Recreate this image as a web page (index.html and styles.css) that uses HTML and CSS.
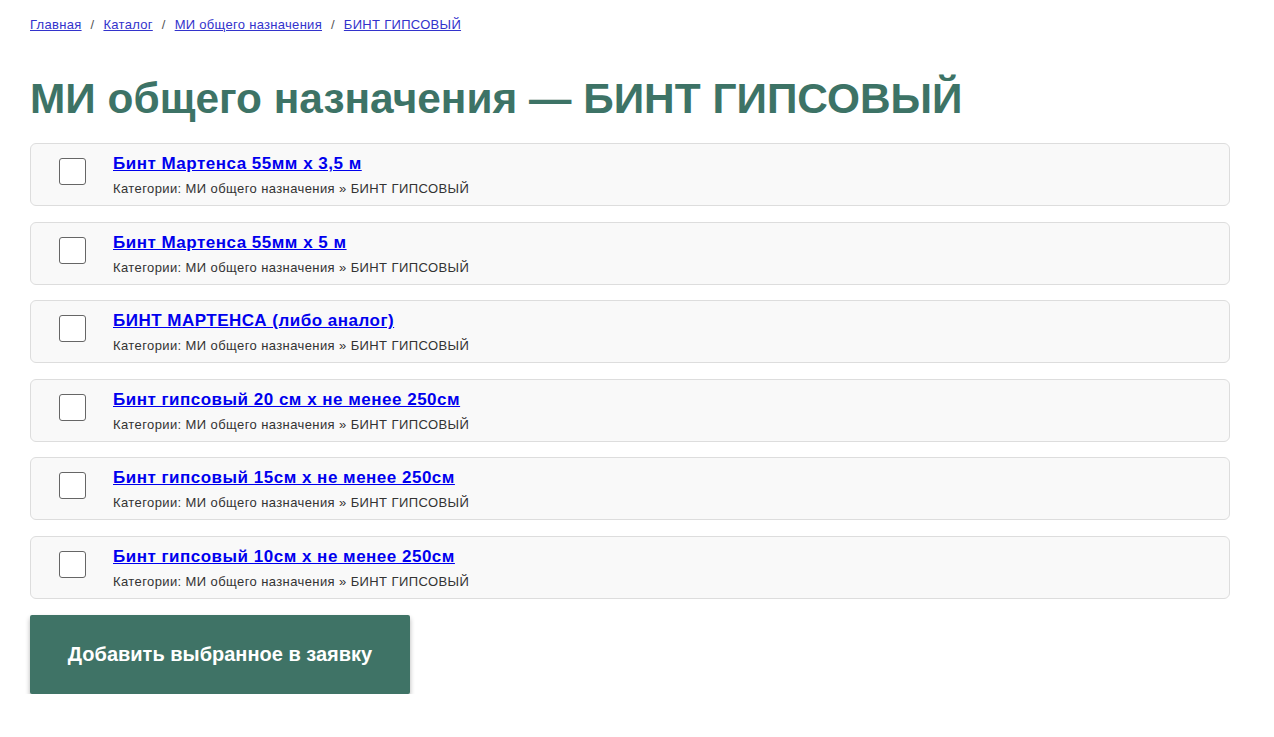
FILE: index.html
```html
<!DOCTYPE html>
<html lang="ru">
<head>
<meta charset="utf-8">
<title>МИ общего назначения — БИНТ ГИПСОВЫЙ</title>
<link rel="stylesheet" href="styles.css">
</head>
<body>
<div class="page">
  <nav class="crumbs">
    <a href="#">Главная</a><span class="sep">/</span>
    <a href="#">Каталог</a><span class="sep">/</span>
    <a href="#">МИ общего назначения</a><span class="sep">/</span>
    <a href="#">БИНТ ГИПСОВЫЙ</a>
  </nav>
  <h1 class="title">МИ общего назначения — БИНТ ГИПСОВЫЙ</h1>
  <form class="list">
    <label class="item">
      <span class="box"><input type="checkbox"></span>
      <span class="info">
        <a class="name" href="#">Бинт Мартенса 55мм х 3,5 м</a>
        <span class="cats">Категории: МИ общего назначения » БИНТ ГИПСОВЫЙ</span>
      </span>
    </label>
    <label class="item">
      <span class="box"><input type="checkbox"></span>
      <span class="info">
        <a class="name" href="#">Бинт Мартенса 55мм х 5 м</a>
        <span class="cats">Категории: МИ общего назначения » БИНТ ГИПСОВЫЙ</span>
      </span>
    </label>
    <label class="item">
      <span class="box"><input type="checkbox"></span>
      <span class="info">
        <a class="name" href="#">БИНТ МАРТЕНСА (либо аналог)</a>
        <span class="cats">Категории: МИ общего назначения » БИНТ ГИПСОВЫЙ</span>
      </span>
    </label>
    <label class="item">
      <span class="box"><input type="checkbox"></span>
      <span class="info">
        <a class="name" href="#">Бинт гипсовый 20 см х не менее 250см</a>
        <span class="cats">Категории: МИ общего назначения » БИНТ ГИПСОВЫЙ</span>
      </span>
    </label>
    <label class="item">
      <span class="box"><input type="checkbox"></span>
      <span class="info">
        <a class="name" href="#">Бинт гипсовый 15см х не менее 250см</a>
        <span class="cats">Категории: МИ общего назначения » БИНТ ГИПСОВЫЙ</span>
      </span>
    </label>
    <label class="item">
      <span class="box"><input type="checkbox"></span>
      <span class="info">
        <a class="name" href="#">Бинт гипсовый 10см х не менее 250см</a>
        <span class="cats">Категории: МИ общего назначения » БИНТ ГИПСОВЫЙ</span>
      </span>
    </label>
    <button type="button" class="submit">Добавить выбранное в заявку</button>
  </form>
</div>
</body>
</html>
```

FILE: styles.css
```css
html, body {
  margin: 0;
  padding: 0;
  background: #ffffff;
}
body {
  font-family: "Liberation Sans", Arial, sans-serif;
  color: #333;
}
.page {
  width: 1200px;
  padding: 15px 0 0 30px;
}
.crumbs {
  font-size: 13px;
  line-height: 20px;
  letter-spacing: 0.3px;
  color: #555;
}
.crumbs a {
  color: #3333cc;
  text-decoration: underline;
}
.crumbs .sep {
  margin: 0 5px 0 9px;
}
.title {
  margin: 38px 0 18px;
  font-size: 42.4px;
  line-height: 52px;
  font-weight: bold;
  color: #3d7366;
}
.list {
  display: flex;
  flex-direction: column;
  gap: 15.6px;
}
.item {
  display: flex;
  align-items: flex-start;
  box-sizing: border-box;
  height: 63px;
  background: #f9f9f9;
  border: 1px solid #dddddd;
  border-radius: 6px;
  padding: 12px 0 0 28px;
}
.box {
  display: block;
  width: 27px;
  height: 27px;
  margin-top: 2px;
}
.box input {
  appearance: none;
  -webkit-appearance: none;
  display: block;
  margin: 0;
  width: 27px;
  height: 27px;
  box-sizing: border-box;
  border: 1px solid #666;
  border-radius: 3px;
  background: #fff;
}
.info {
  display: flex;
  flex-direction: column;
  align-items: flex-start;
  margin-left: 27px;
}
.name {
  font-size: 17px;
  line-height: 16px;
  letter-spacing: 0.5px;
  font-weight: bold;
  color: #0000ee;
  text-decoration: underline;
}
.cats {
  margin-top: 9px;
  font-size: 13px;
  line-height: 16px;
  letter-spacing: 0.4px;
  color: #333;
}
.submit {
  align-self: flex-start;
  width: 380px;
  height: 79px;
  border: none;
  border-radius: 2px;
  background: #3f7366;
  color: #ffffff;
  font-family: "Liberation Sans", Arial, sans-serif;
  font-size: 20px;
  font-weight: bold;
  box-shadow: 0 3px 5px rgba(0, 0, 0, 0.3);
}
```
